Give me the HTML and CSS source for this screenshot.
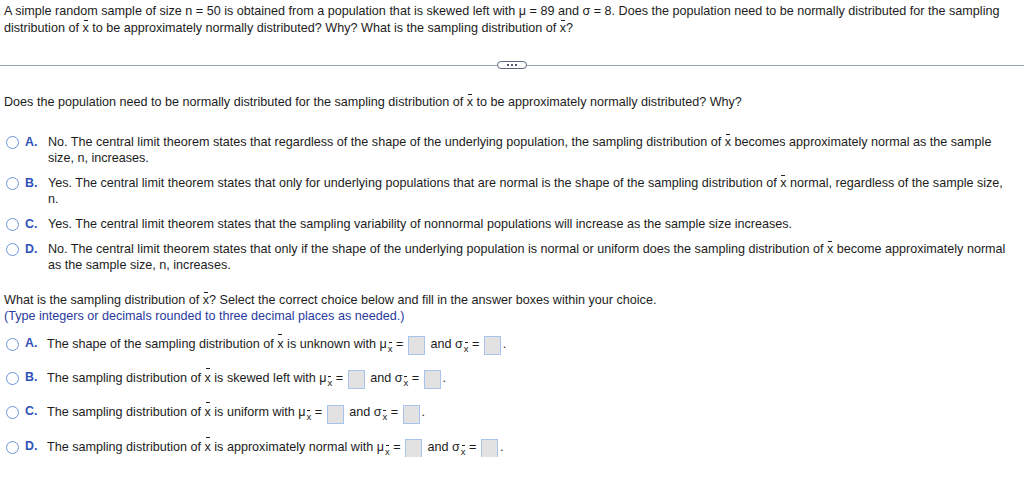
FILE: index.html
```html
<!DOCTYPE html>
<html>
<head>
<meta charset="utf-8">
<link rel="stylesheet" href="styles.css">
</head>
<body>
<div class="question">A simple random sample of size n = 50 is obtained from a population that is skewed left with μ = 89 and σ = 8. Does the population need to be normally distributed for the sampling distribution of <span class="xbar">x</span> to be approximately normally distributed? Why? What is the sampling distribution of <span class="xbar">x</span>?</div>

<div class="divider"><span class="line"></span><span class="more"><i></i><i></i><i></i></span><span class="line"></span></div>

<div class="part1">
  <p class="prompt">Does the population need to be normally distributed for the sampling distribution of <span class="xbar">x</span> to be approximately normally distributed? Why?</p>
  <div class="choices">
    <div class="choice"><span class="radio"></span><span class="letter">A.</span><span class="text">No. The central limit theorem states that regardless of the shape of the underlying population, the sampling distribution of <span class="xbar">x</span> becomes approximately normal as the sample size, n, increases.</span></div>
    <div class="choice"><span class="radio"></span><span class="letter">B.</span><span class="text">Yes. The central limit theorem states that only for underlying populations that are normal is the shape of the sampling distribution of <span class="xbar">x</span> normal, regardless of the sample size, n.</span></div>
    <div class="choice"><span class="radio"></span><span class="letter">C.</span><span class="text">Yes. The central limit theorem states that the sampling variability of nonnormal populations will increase as the sample size increases.</span></div>
    <div class="choice"><span class="radio"></span><span class="letter">D.</span><span class="text">No. The central limit theorem states that only if the shape of the underlying population is normal or uniform does the sampling distribution of <span class="xbar">x</span> become approximately normal as the sample size, n, increases.</span></div>
  </div>
</div>

<div class="part2">
  <p class="prompt2">What is the sampling distribution of <span class="xbar">x</span>? Select the correct choice below and fill in the answer boxes within your choice.</p>
  <p class="hint">(Type integers or decimals rounded to three decimal places as needed.)</p>
  <div class="choices2">
    <div class="choice2"><span class="radio"></span><span class="letter">A.</span><span class="text">The shape of the sampling distribution of <span class="xbar">x</span> is unknown with μ<sub class="xbar">x</sub> = <span class="box"></span> and σ<sub class="xbar">x</sub> = <span class="box"></span>.</span></div>
    <div class="choice2"><span class="radio"></span><span class="letter">B.</span><span class="text">The sampling distribution of <span class="xbar">x</span> is skewed left with μ<sub class="xbar">x</sub> = <span class="box"></span> and σ<sub class="xbar">x</sub> = <span class="box"></span>.</span></div>
    <div class="choice2"><span class="radio"></span><span class="letter">C.</span><span class="text">The sampling distribution of <span class="xbar">x</span> is uniform with μ<sub class="xbar">x</sub> = <span class="box"></span> and σ<sub class="xbar">x</sub> = <span class="box"></span>.</span></div>
    <div class="choice2"><span class="radio"></span><span class="letter">D.</span><span class="text">The sampling distribution of <span class="xbar">x</span> is approximately normal with μ<sub class="xbar">x</sub> = <span class="box"></span> and σ<sub class="xbar">x</sub> = <span class="box"></span>.</span></div>
  </div>
</div>
</body>
</html>
```
FILE: styles.css
```css
body {
  margin: 0;
  padding: 0 4px;
  font-family: "Liberation Sans", Arial, sans-serif;
  font-size: 12.6px;
  color: #1c1c1c;
  background: #fff;
}
p { margin: 0; }

.question {
  padding-top: 3px;
  line-height: 17px;
  padding-right: 12px;
}

.xbar {
  position: relative;
  display: inline-block;
}
.xbar::before {
  content: "";
  position: absolute;
  left: 50%;
  margin-left: -2px;
  top: 0px;
  width: 4px;
  height: 1px;
  background: #222;
}

.divider {
  display: flex;
  align-items: center;
  margin: 23px -4px 0;
  height: 10px;
}
.divider .line {
  flex: 1;
  height: 1px;
  background: #9aa3b4;
}
.divider .more {
  width: 28px;
  height: 6px;
  border: 1px solid #5e6a80;
  border-radius: 4px;
  display: flex;
  justify-content: center;
  align-items: center;
  gap: 2px;
  background: #fff;
}
.divider .more i {
  width: 2px;
  height: 2px;
  background: #4e5a70;
}

.part1 { padding-top: 24px; }
.prompt { line-height: 17px; }

.choices {
  padding-top: 23px;
  display: flex;
  flex-direction: column;
  gap: 9px;
}
.choice {
  display: flex;
  align-items: flex-start;
  line-height: 16px;
}
.choice .text { flex: 1; padding-right: 8px; }

.radio {
  flex: none;
  width: 11px;
  height: 11px;
  border: 1px solid #6b93dc;
  border-radius: 50%;
  margin: 2px 0 0 2px;
  box-sizing: content-box;
}
.letter {
  flex: none;
  width: 29px;
  padding-left: 6px;
  box-sizing: border-box;
  font-weight: bold;
  font-size: 12.4px;
  color: #2f52b8;
}

.part2 { padding-top: 19px; }
.prompt2 { line-height: 16px; }
.hint { line-height: 16px; color: #2a3aa0; }

.choices2 {
  padding-top: 10px;
  display: flex;
  flex-direction: column;
  gap: 14px;
}
.choice2 {
  display: flex;
  align-items: flex-start;
  line-height: 20px;
}
.choice2 .radio { margin-top: 4px; }
.choice2 .letter { line-height: 19px; width: 28px; }

sub.xbar {
  font-size: 9.5px;
  vertical-align: -4px;
  line-height: 0;
  margin-left: 1px;
}
sub.xbar::before { top: -7px; margin-left: -1.5px; width: 3px; }

.box {
  display: inline-block;
  width: 15px;
  height: 17px;
  border: 1px solid #a9c4ec;
  background: #e2e2e2;
  vertical-align: middle;
  margin: 0 2px 0 1px;
  position: relative;
  top: 1px;
}
```
